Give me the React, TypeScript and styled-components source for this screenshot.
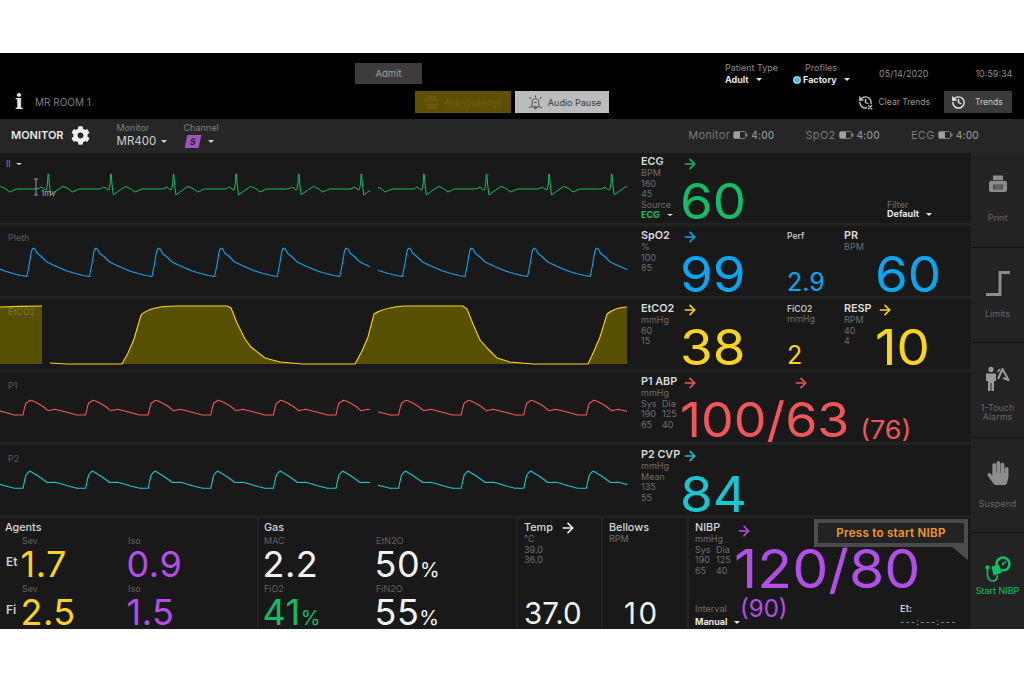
import React from 'react'
import styled, { createGlobalStyle } from 'styled-components'
import { ArrowRight, History } from 'lucide-react'
import { FaCog, FaHandPaper } from 'react-icons/fa'

const GREEN = '#12bd66'
const BLUE = '#0aa6f2'
const YELLOW = '#fbd51c'
const RED = '#f2565a'
const CYAN = '#17c6cf'
const PURPLE = '#b24fe8'

const GlobalStyle = createGlobalStyle`
	html, body {
		margin: 0;
		background: #fff;
	}
	* {
		box-sizing: border-box;
	}
`

const Page = styled.div`
	width: 1024px;
	height: 683px;
	padding-top: 53px;
	background: #fff;
	font-family: Inter, "Open Sans", sans-serif;
	overflow: hidden;
`

const Monitor = styled.div`
	height: 576px;
	overflow: hidden;
	background: #232323;
	display: flex;
	flex-direction: column;
`

const TopBar = styled.header`
	height: 66px;
	background: #000;
	flex: none;
`

const TopRow = styled.div`
	height: 38px;
	display: flex;
	align-items: center;
`

const AdmitButton = styled.div`
	width: 67px;
	height: 21px;
	margin-left: 355px;
	margin-top: 2px;
	background: #3d3d3d;
	color: #a0a0a0;
	font-size: 9.5px;
	display: flex;
	align-items: center;
	justify-content: center;
`

const Picker = styled.div<{ $left: number; $width: number }>`
	margin-left: ${p => p.$left}px;
	width: ${p => p.$width}px;
	display: flex;
	flex-direction: column;
	gap: 3px;
	margin-top: 3px;
`

const PickerLabel = styled.span<{ $indent?: number }>`
	font-size: 9px;
	line-height: 9px;
	color: #8d8d8d;
	padding-left: ${p => p.$indent || 0}px;
	white-space: nowrap;
`

const PickerValue = styled.span`
	font-size: 9px;
	line-height: 10px;
	font-weight: 700;
	color: #e6e6e6;
	display: flex;
	align-items: center;
	white-space: nowrap;
`

const ProfileDot = styled.i`
	width: 8px;
	height: 8px;
	border-radius: 50%;
	background: #3fb0e8;
	border: 2px solid #7fcdf0;
	margin-right: 2px;
`

const Caret = styled.i<{ $gap?: number; $size?: number; $color?: string }>`
	display: inline-block;
	margin-left: ${p => p.$gap ?? 7}px;
	width: 0;
	height: 0;
	border-left: ${p => p.$size || 3.5}px solid transparent;
	border-right: ${p => p.$size || 3.5}px solid transparent;
	border-top: ${p => (p.$size || 3.5) - 0.5}px solid ${p => p.$color || '#e6e6e6'};
`

const Clock = styled.span<{ $left: number }>`
	margin-left: ${p => p.$left}px;
	margin-top: 3px;
	font-size: 9px;
	color: #8d8d8d;
	white-space: nowrap;
`

const ActionRow = styled.div`
	height: 22px;
	display: flex;
	align-items: center;
`

const InfoMark = styled.span`
	width: 20px;
	margin-left: 15px;
	font-family: "DejaVu Serif", serif;
	font-size: 21px;
	line-height: 22px;
	font-weight: 700;
	color: #e8e8e8;
`

const RoomName = styled.span`
	width: 380px;
	font-size: 10px;
	color: #7f7f7f;
`

const AlarmButton = styled.div<{ $width: number; $bg: string; $fg: string; $shift?: number }>`
	width: ${p => p.$width}px;
	height: 22px;
	margin-right: 4px;
	padding-left: ${p => p.$shift || 0}px;
	background: ${p => p.$bg};
	color: ${p => p.$fg};
	font-size: 9px;
	display: flex;
	align-items: center;
	justify-content: center;
	gap: 5px;
`

const TrendLink = styled.div`
	margin-left: auto;
	margin-right: 14px;
	display: flex;
	align-items: center;
	gap: 6px;
	color: #9a9a9a;
	font-size: 8.5px;
`

const TrendButton = styled.div`
	width: 68px;
	height: 22px;
	margin-right: 12px;
	background: #3a3a3a;
	color: #c8c8c8;
	font-size: 8.5px;
	display: flex;
	align-items: center;
	gap: 9px;
	padding-left: 7px;
`

const SubBar = styled.div`
	height: 34px;
	flex: none;
	display: flex;
	align-items: center;
	padding: 0 0 2px 11px;
	background: #262626;
`

const SubTitle = styled.span`
	font-size: 11px;
	font-weight: 600;
	color: #e8e8e8;
`

const GearWrap = styled.span`
	margin-left: 7px;
	display: flex;
	color: #f0f0f0;
`

const SubPicker = styled.div<{ $left: number; $width: number }>`
	margin-left: ${p => p.$left}px;
	width: ${p => p.$width}px;
	display: flex;
	flex-direction: column;
	gap: 3px;
`

const SubLabel = styled.span`
	font-size: 9px;
	line-height: 9px;
	color: #7f7f7f;
`

const SubValue = styled.span`
	font-size: 11.5px;
	line-height: 13px;
	color: #cfcfcf;
	display: flex;
	align-items: center;
`

const ChannelBadge = styled.span`
	width: 14px;
	height: 13px;
	margin-left: 2px;
	background: #a552ba;
	color: #1b1b1b;
	font-size: 9px;
	font-weight: 700;
	transform: skewX(-12deg);
	display: flex;
	align-items: center;
	justify-content: center;
`

const BatteryList = styled.div`
	margin-left: auto;
	margin-right: 45px;
	display: flex;
	gap: 31px;
`

const BatteryItem = styled.span`
	display: flex;
	align-items: center;
	gap: 3px;
	font-size: 11px;
	letter-spacing: 0.3px;
	color: #787878;
	b {
		font-size: 10px;
		font-weight: 500;
		letter-spacing: 0.2px;
		color: #909090;
	}
`

const Body = styled.div`
	flex: 1;
	display: flex;
	min-height: 0;
`

const Main = styled.main`
	width: 971px;
	display: flex;
	flex-direction: column;
	gap: 3px;
`

const Row = styled.section`
	height: 70px;
	flex: none;
	background: #191919;
	display: flex;
`

const WaveArea = styled.div`
	position: relative;
	width: 632px;
	flex: none;
	svg {
		display: block;
	}
`

const WaveLabel = styled.span<{ $top: number; $color?: string }>`
	position: absolute;
	left: 8px;
	top: ${p => p.$top}px;
	font-size: 9px;
	color: ${p => p.$color || '#5c5c5c'};
`

const LeadLabel = styled.span`
	position: absolute;
	left: 6px;
	top: 6px;
	font-size: 8.5px;
	color: #8a8a8a;
	display: flex;
	align-items: center;
`

const CalLabel = styled.span`
	position: absolute;
	left: 41px;
	top: 35px;
	font-size: 8px;
	color: #a8a8a8;
`

const Params = styled.div`
	flex: 1;
	display: flex;
	padding-left: 9px;
`

const Metric = styled.div<{ $width?: number }>`
	display: flex;
	height: 100%;
	flex: none;
	width: ${p => (p.$width ? `${p.$width}px` : 'auto')};
`

const LabelColumn = styled.div<{ $width: number; $top?: number }>`
	width: ${p => p.$width}px;
	flex: none;
	padding-top: ${p => p.$top ?? 4}px;
	display: flex;
	flex-direction: column;
`

const MetricName = styled.span`
	font-size: 10.8px;
	line-height: 12px;
	font-weight: 600;
	color: #dcdcdc;
	white-space: nowrap;
`

const SmallText = styled.span`
	font-size: 9px;
	line-height: 10.6px;
	color: #6e6e6e;
	white-space: nowrap;
`

const PairText = styled(SmallText)`
	display: flex;
	span {
		width: 21px;
	}
`

const SourceValue = styled.span`
	font-size: 9px;
	line-height: 9px;
	font-weight: 700;
	color: ${GREEN};
	display: flex;
	align-items: center;
`

const ValueColumn = styled.div<{ $bottom?: number }>`
	display: flex;
	flex-direction: column;
	justify-content: space-between;
	padding-top: 3px;
	padding-bottom: ${p => p.$bottom ?? 3}px;
`

const ArrowRow = styled.div<{ $color: string }>`
	height: 16px;
	flex: none;
	display: flex;
	color: ${p => p.$color};
`

const ArrowSpacer = styled.span`
	width: 95px;
`

// the reference digits are wider than any installed face, so they get stretched a little
const BigValue = styled.div<{ $color: string; $size?: number; $lower?: number }>`
	font-size: ${p => p.$size || 49}px;
	line-height: 36px;
	margin-left: -2px;
	margin-bottom: ${p => -(p.$lower || 0)}px;
	transform: scaleX(1.08);
	transform-origin: left center;
	color: ${p => p.$color};
	white-space: nowrap;
`

const MeanValue = styled.span`
	font-size: 25px;
	margin-left: 10px;
	vertical-align: -2px;
`

const SideMetric = styled.div<{ $width: number }>`
	width: ${p => p.$width}px;
	flex: none;
	padding: 5px 0 3px;
	display: flex;
	flex-direction: column;
`

const SideName = styled.span`
	font-size: 8.5px;
	line-height: 10px;
	font-weight: 600;
	color: #c4c4c4;
`

const SideValue = styled.span<{ $color: string }>`
	margin-top: auto;
	font-size: 25px;
	line-height: 22px;
	color: ${p => p.$color};
`

const FilterBlock = styled.div`
	margin-left: auto;
	margin-right: 39px;
	align-self: flex-end;
	padding-bottom: 4px;
	display: flex;
	flex-direction: column;
	span:first-child {
		line-height: 9px;
	}
`

const BottomRow = styled.div`
	height: 111px;
	flex: none;
	display: grid;
	grid-template-columns: 257px 257px 83px 84px 282px;
	column-gap: 2px;
`

const Tile = styled.section`
	position: relative;
	background: #191919;
	padding: 4px 5px;
	display: flex;
	flex-direction: column;
	overflow: hidden;
`

const NarrowTile = styled(Tile)`
	padding: 4px 6px;
`

const TileTitle = styled.span`
	height: 12px;
	font-size: 10.8px;
	line-height: 12px;
	font-weight: 500;
	color: #d8d8d8;
	display: flex;
	align-items: center;
	gap: 7px;
	white-space: nowrap;
`

const ReadingGrid = styled.div<{ $first: number; $second: number }>`
	display: grid;
	grid-template-columns: ${p => p.$first}px ${p => p.$second}px 1fr;
	grid-auto-rows: 48px;
	margin-top: 2px;
`

const RowTag = styled.span`
	font-size: 12px;
	font-weight: 600;
	color: #d0d0d0;
	align-self: center;
	padding: 3px 0 0 1px;
`

const Reading = styled.div`
	display: flex;
	flex-direction: column;
`

const ReadingLabel = styled.span`
	font-size: 9px;
	line-height: 10px;
	color: #626262;
`

const ReadingValue = styled.span<{ $color: string }>`
	margin-top: 2px;
	margin-left: -1.5px;
	font-size: 36px;
	line-height: 32px;
	letter-spacing: 0.5px;
	color: ${p => p.$color};
	white-space: nowrap;
	small {
		font-size: 20px;
		letter-spacing: 0;
	}
`

const TempValue = styled.span<{ $indent?: number; $spread?: number }>`
	margin-top: auto;
	padding-left: ${p => p.$indent || 0}px;
	font-size: 29.5px;
	line-height: 24px;
	letter-spacing: ${p => p.$spread || 0}px;
	color: #f2f2f2;
`

const NibpTop = styled.div`
	display: flex;
`

const NibpLabels = styled.div`
	width: 41px;
	flex: none;
	display: flex;
	flex-direction: column;
`

const NibpValues = styled.div`
	display: flex;
	flex-direction: column;
	gap: 12px;
	padding-top: 1px;
`

const NibpBottom = styled.div`
	margin-top: auto;
	margin-bottom: -2px;
	display: flex;
	align-items: flex-end;
`

const IntervalBlock = styled.div`
	width: 45px;
	flex: none;
	display: flex;
	flex-direction: column;
	gap: 2px;
`

const NibpMean = styled.span`
	width: 160px;
	flex: none;
	align-self: flex-start;
	margin-top: -8px;
	font-size: 24px;
	line-height: 26px;
	color: ${PURPLE};
`

const ElapsedBlock = styled.div`
	display: flex;
	flex-direction: column;
	gap: 3px;
`

const ElapsedLabel = styled.span`
	font-size: 9.5px;
	line-height: 10px;
	font-weight: 600;
	color: #cfcfcf;
`

const ElapsedValue = styled.span`
	font-size: 9px;
	line-height: 10px;
	letter-spacing: 1.3px;
	color: #aaa;
	white-space: nowrap;
`

const Tooltip = styled.div`
	position: absolute;
	left: 125px;
	top: 1px;
	width: 154px;
	height: 28px;
	border: 4px solid #4c4c4c;
	background: #232323;
	color: #f2991f;
	font-size: 11.5px;
	letter-spacing: 0.3px;
	font-weight: 600;
	display: flex;
	align-items: center;
	justify-content: center;
	&::after {
		content: '';
		position: absolute;
		right: -4px;
		top: 24px;
		width: 16px;
		height: 13px;
		background: #4c4c4c;
		clip-path: polygon(0 0, 100% 0, 100% 100%);
	}
`

const Rail = styled.aside`
	width: 53px;
	flex: none;
	display: flex;
	flex-direction: column;
`

const RailButton = styled.div<{ $active?: boolean }>`
	height: 95px;
	flex: none;
	display: flex;
	flex-direction: column;
	align-items: center;
	padding-top: ${p => (p.$active ? 22 : 21)}px;
	border-bottom: 1px solid #141414;
	color: ${p => (p.$active ? GREEN : '#666')};
	&:first-child {
		padding-top: 17px;
	}
	&:last-child {
		height: 96px;
		border-bottom: 0;
	}
`

const RailIcon = styled.div<{ $active?: boolean }>`
	height: 28px;
	flex: none;
	display: flex;
	align-items: center;
	justify-content: center;
	color: ${p => (p.$active ? GREEN : '#8c8c8c')};
`

const RailLabel = styled.span<{ $gap?: number }>`
	margin-top: ${p => p.$gap ?? 12}px;
	font-size: 9px;
	line-height: 9px;
	text-align: center;
	white-space: nowrap;
`

type Point = [number, number]

const ecgShape: Point[] = [[-12, 36], [-9, 35.5], [-7, 34], [-5, 35], [-3, 37], [-1.5, 36.5], [-0.4, 30], [0, 21], [0.6, 21], [1.5, 32], [2.7, 42], [6.7, 39], [10, 36.7], [15, 33.3], [20, 35.7], [24.3, 39], [29.3, 36.7], [31, 36], [50.6, 36]]
const plethShape: Point[] = [[-6.5, 50.5], [-4, 38], [-2, 26], [-1, 23], [0, 22.3], [1.5, 23], [4, 27.5], [8, 30.5], [13, 35.7], [22, 40], [33, 44.7], [42, 47.5], [50, 49.5], [56, 50.5]]
const abpShape: Point[] = [[-7, 43], [-5.5, 36], [-4, 31], [-2, 30], [0, 28.3], [3, 29], [8, 31.5], [13, 34.5], [18, 38.7], [25, 37.3], [30, 38.5], [38, 40.5], [47, 43], [55.6, 43]]
const cvpShape: Point[] = [[-7, 43.3], [-5.5, 36], [-4, 30], [-2, 27.5], [0, 26], [3, 28], [8, 31], [13, 34.5], [17, 37.5], [25, 37.3], [30, 38.5], [38, 41], [47, 43.3], [55.6, 43.3]]

const yAt = (points: Point[], x: number) => {
	const next = points.findIndex(p => p[0] >= x)
	if (next <= 0) return points[Math.max(next, 0)][1]
	const [x0, y0] = points[next - 1]
	const [x1, y1] = points[next]
	return y0 + ((y1 - y0) * (x - x0)) / (x1 - x0)
}

// the sweep leaves a small gap at 370-378, every trace stops at 627
const buildTrace = (shape: Point[], start: number) => {
	const points: Point[] = []
	for (let i = -1; i < 11; i++) {
		const peak = start + i * 62.6
		shape.forEach(([x, y]) => points.push([peak + x, y]))
	}
	const segment = (from: number, to: number) => {
		const inner = points.filter(([x]) => x > from && x < to)
		const line: Point[] = [[from, yAt(points, from)], ...inner, [to, yAt(points, to)]]
		return line.map(([x, y], i) => `${i ? 'L' : 'M'}${x.toFixed(1)} ${y.toFixed(1)}`).join(' ')
	}
	return `${segment(0, 370)} ${segment(378, 627)}`
}

const co2Top = 'M0 8 L20 7.4 L42 7'
const co2Mid = 'M50 64 L66 65 L122 65 L128 54 L134 40 L141 16 C146 11 158 7 176 7 L227 7 L231 9 L237 24 L245 40 L251 48 L265 59 L280 63 L302 65 L355 65 L362 52 L368 38 L374 15 C380 11 388 8 404 7 L463 7 L467 10 L473 25 L480 41 L488 50 L497 59 L510 63 L533 65 L588 65 L594 52 L600 38 L607 15 C612 11 620 8 627 8'
const co2Fill = `${co2Top} L42 65 L0 65 Z ${co2Mid.replace('M50 64 L66 65 L122 65', 'M122 65')} L627 65 Z`

const Trace = ({ d, color }: { d: string; color: string }) => (
	<svg width="632" height="70" viewBox="0 0 632 70">
		<path d={d} fill="none" stroke={color} strokeWidth="1.1" strokeLinejoin="round" />
	</svg>
)

const Arrow = ({ size = 16 }: { size?: number }) => <ArrowRight size={size} strokeWidth={2.3} />

const BatteryIcon = () => (
	<svg width="15" height="8" viewBox="0 0 15 8">
		<rect x="0.5" y="0.5" width="12" height="7" rx="1" fill="none" stroke="#7a7a7a" />
		<rect x="1" y="1" width="6" height="6" fill="#a0a0a0" />
		<rect x="13" y="2.5" width="1.5" height="3" fill="#7a7a7a" />
	</svg>
)

const AckIcon = () => (
	<svg width="15" height="15" viewBox="0 0 16 16" fill="none" stroke="#6f5e08" strokeWidth="1.4">
		<circle cx="8" cy="8" r="6.5" />
		<path d="M1.5 6H14.5M1.5 10H14.5M5 3.5H11M5 12.5H11" />
	</svg>
)

const BellIcon = () => (
	<svg width="15" height="15" viewBox="0 0 17 17" fill="none" stroke="#3a3a3a" strokeWidth="1">
		<path d="M4 13.5C5 11.5 4.5 9 5 7C5.5 5 7 4 8.5 4C10 4 11.5 5 12 7C12.5 9 12 11.5 13 13.5Z" />
		<circle cx="8.5" cy="14.8" r="1" />
		<path d="M1.5 2.5L4 4.5M15.5 2.5L13 4.5M8.5 0.5V2.5M1 14H3M14 14H16M7 8.5L10 8.5" />
	</svg>
)

const ClearTrendsIcon = () => (
	<svg width="15" height="15" viewBox="0 0 24 24" fill="none" stroke="#c8c8c8" strokeWidth="2.2" strokeLinecap="round" strokeLinejoin="round">
		<path d="M3 12a9 9 0 1 0 9-9 9.75 9.75 0 0 0-6.74 2.74L3 8" />
		<path d="M3 3v5h5" />
		<path d="M12 7v5l4 2" />
		<rect x="15" y="15" width="9" height="9" fill="#000" stroke="none" />
		<path d="M17 17l5 5M22 17l-5 5" />
	</svg>
)

const PrintIcon = () => (
	<svg width="20" height="20" viewBox="0 0 20 20">
		<path d="M5 1.5H15V6H5Z" fill="#8c8c8c" />
		<path d="M3 6.8H17C18 6.8 19 7.8 19 9V16C19 17 18 18 17 18H3C2 18 1 17 1 16V9C1 7.8 2 6.8 3 6.8Z" fill="#8c8c8c" />
		<path d="M5 10.5H15V15.5H5Z" fill="#4a4a4a" />
		<path d="M6.5 12H13.5M6.5 14H13.5" stroke="#8c8c8c" strokeWidth="0.8" />
	</svg>
)

const LimitsIcon = () => (
	<svg width="24" height="25" viewBox="0 0 24 25" fill="none" stroke="#8c8c8c" strokeWidth="3">
		<path d="M0 23.5H14V1.5H24" />
	</svg>
)

const OneTouchIcon = () => (
	<svg width="25" height="25" viewBox="0 0 25 25">
		<circle cx="6" cy="3.4" r="2.6" fill="#9a9a9a" />
		<path d="M1 7.5H11V15H9V25H6.5V17H5.5V25H3V15H1Z" fill="#9a9a9a" />
		<path d="M13 13L17.5 3L23.5 14L18 12" fill="none" stroke="#9a9a9a" strokeWidth="2" strokeLinejoin="round" />
		<path d="M12.5 6L15 3" stroke="#9a9a9a" strokeWidth="1.6" />
	</svg>
)

const CuffIcon = () => (
	<svg width="26" height="27" viewBox="0 0 26 27" fill="none">
		<circle cx="18" cy="8" r="6.5" stroke={GREEN} strokeWidth="2.6" />
		<circle cx="18" cy="8" r="1.3" fill={GREEN} />
		<path d="M18 8L21 5" stroke={GREEN} strokeWidth="1.2" />
		<path d="M6.5 10.5L14 8.5L16.5 17L8.5 19.5Z" fill={GREEN} />
		<path d="M2.5 12V19C2.5 24 7 26 10 24.5C12 23.5 12.5 21 12.5 19" stroke={GREEN} strokeWidth="1.6" />
		<circle cx="2.5" cy="11.5" r="2.2" fill={GREEN} />
	</svg>
)

const App = () => {
	return (
		<Page>
			<GlobalStyle />
			<Monitor>
				<TopBar>
					<TopRow>
						<AdmitButton>Admit</AdmitButton>
						<Picker $left={303} $width={68}>
							<PickerLabel>Patient Type</PickerLabel>
							<PickerValue>Adult<Caret /></PickerValue>
						</Picker>
						<Picker $left={0} $width={86}>
							<PickerLabel $indent={12}>Profiles</PickerLabel>
							<PickerValue><ProfileDot />Factory<Caret /></PickerValue>
						</Picker>
						<Clock $left={0}>05/14/2020</Clock>
						<Clock $left={47}>10:59:34</Clock>
					</TopRow>
					<ActionRow>
						<InfoMark>i</InfoMark>
						<RoomName>MR ROOM 1</RoomName>
						<AlarmButton $width={96} $bg="#5e4f03" $fg="#6f5e08"><AckIcon />Acknowledge</AlarmButton>
						<AlarmButton $width={94} $bg="#bcbcbc" $fg="#3a3a3a" $shift={5}><BellIcon />Audio Pause</AlarmButton>
						<TrendLink><ClearTrendsIcon />Clear Trends</TrendLink>
						<TrendButton><History size={15} strokeWidth={2.2} color="#eee" />Trends</TrendButton>
					</ActionRow>
				</TopBar>
				<SubBar>
					<SubTitle>MONITOR</SubTitle>
					<GearWrap><FaCog size={19} /></GearWrap>
					<SubPicker $left={27} $width={67}>
						<SubLabel>Monitor</SubLabel>
						<SubValue>MR400<Caret $color="#cfcfcf" $gap={5} /></SubValue>
					</SubPicker>
					<SubPicker $left={0} $width={60}>
						<SubLabel>Channel</SubLabel>
						<SubValue><ChannelBadge>5</ChannelBadge><Caret $color="#cfcfcf" $gap={8} /></SubValue>
					</SubPicker>
					<BatteryList>
						<BatteryItem>Monitor <BatteryIcon /> <b>4:00</b></BatteryItem>
						<BatteryItem>SpO2 <BatteryIcon /> <b>4:00</b></BatteryItem>
						<BatteryItem>ECG <BatteryIcon /> <b>4:00</b></BatteryItem>
					</BatteryList>
				</SubBar>
				<Body>
					<Main>
						<Row>
							<WaveArea>
								<svg width="632" height="70" viewBox="0 0 632 70">
									<path d={buildTrace(ecgShape, 48)} fill="none" stroke={GREEN} strokeWidth="1" />
									<path d="M34 26H38M36 26V42M34 42H38" fill="none" stroke="#9a9a9a" />
								</svg>
								<LeadLabel>II<Caret $size={3} $gap={5} /></LeadLabel>
								<CalLabel>1mv</CalLabel>
							</WaveArea>
							<Params>
								<Metric>
									<LabelColumn $width={41} $top={3}>
										<MetricName>ECG</MetricName>
										<SmallText>BPM</SmallText>
										<SmallText>160</SmallText>
										<SmallText>45</SmallText>
										<SmallText>Source</SmallText>
										<SourceValue>ECG<Caret $size={3} /></SourceValue>
									</LabelColumn>
									<ValueColumn>
										<ArrowRow $color={GREEN}><Arrow /></ArrowRow>
										<BigValue $color={GREEN}>60</BigValue>
									</ValueColumn>
								</Metric>
								<FilterBlock>
									<SmallText>Filter</SmallText>
									<PickerValue>Default<Caret /></PickerValue>
								</FilterBlock>
							</Params>
						</Row>
						<Row>
							<WaveArea>
								<Trace d={buildTrace(plethShape, 33.3)} color={BLUE} />
								<WaveLabel $top={6}>Pleth</WaveLabel>
							</WaveArea>
							<Params>
								<Metric $width={146}>
									<LabelColumn $width={41}>
										<MetricName>SpO2</MetricName>
										<SmallText>%</SmallText>
										<SmallText>100</SmallText>
										<SmallText>85</SmallText>
									</LabelColumn>
									<ValueColumn>
										<ArrowRow $color={BLUE}><Arrow /></ArrowRow>
										<BigValue $color={BLUE}>99</BigValue>
									</ValueColumn>
								</Metric>
								<SideMetric $width={57}>
									<SideName>Perf</SideName>
									<SideValue $color={BLUE}>2.9</SideValue>
								</SideMetric>
								<Metric>
									<LabelColumn $width={33}>
										<MetricName>PR</MetricName>
										<SmallText>BPM</SmallText>
									</LabelColumn>
									<ValueColumn>
										<ArrowRow $color="transparent" />
										<BigValue $color={BLUE}>60</BigValue>
									</ValueColumn>
								</Metric>
							</Params>
						</Row>
						<Row>
							<WaveArea>
								<svg width="632" height="70" viewBox="0 0 632 70">
									<path d={co2Fill} fill="#575000" />
									<path d={`${co2Top} ${co2Mid}`} fill="none" stroke={YELLOW} strokeWidth="1.1" />
								</svg>
								<WaveLabel $top={7} $color="#807a30">EtCO2</WaveLabel>
							</WaveArea>
							<Params>
								<Metric $width={146}>
									<LabelColumn $width={41}>
										<MetricName>EtCO2</MetricName>
										<SmallText>mmHg</SmallText>
										<SmallText>60</SmallText>
										<SmallText>15</SmallText>
									</LabelColumn>
									<ValueColumn>
										<ArrowRow $color={YELLOW}><Arrow /></ArrowRow>
										<BigValue $color={YELLOW}>38</BigValue>
									</ValueColumn>
								</Metric>
								<SideMetric $width={57}>
									<SideName>FiCO2</SideName>
									<SmallText>mmHg</SmallText>
									<SideValue $color={YELLOW}>2</SideValue>
								</SideMetric>
								<Metric>
									<LabelColumn $width={33}>
										<MetricName>RESP</MetricName>
										<SmallText>RPM</SmallText>
										<SmallText>40</SmallText>
										<SmallText>4</SmallText>
									</LabelColumn>
									<ValueColumn>
										<ArrowRow $color={YELLOW}><Arrow /></ArrowRow>
										<BigValue $color={YELLOW}>10</BigValue>
									</ValueColumn>
								</Metric>
							</Params>
						</Row>
						<Row>
							<WaveArea>
								<Trace d={buildTrace(abpShape, 30)} color={RED} />
								<WaveLabel $top={8}>P1</WaveLabel>
							</WaveArea>
							<Params>
								<Metric>
									<LabelColumn $width={41}>
										<MetricName>P1 ABP</MetricName>
										<SmallText>mmHg</SmallText>
										<PairText><span>Sys</span>Dia</PairText>
										<PairText><span>190</span>125</PairText>
										<PairText><span>65</span>40</PairText>
									</LabelColumn>
									<ValueColumn>
										<ArrowRow $color={RED}><Arrow /><ArrowSpacer /><Arrow /></ArrowRow>
										<BigValue $color={RED} $size={48} $lower={9}>100/63<MeanValue>(76)</MeanValue></BigValue>
									</ValueColumn>
								</Metric>
							</Params>
						</Row>
						<Row>
							<WaveArea>
								<Trace d={buildTrace(cvpShape, 30)} color={CYAN} />
								<WaveLabel $top={8}>P2</WaveLabel>
							</WaveArea>
							<Params>
								<Metric>
									<LabelColumn $width={41}>
										<MetricName>P2 CVP</MetricName>
										<SmallText>mmHg</SmallText>
										<SmallText>Mean</SmallText>
										<SmallText>135</SmallText>
										<SmallText>55</SmallText>
									</LabelColumn>
									<ValueColumn $bottom={2}>
										<ArrowRow $color={CYAN}><Arrow /></ArrowRow>
										<BigValue $color={CYAN}>84</BigValue>
									</ValueColumn>
								</Metric>
							</Params>
						</Row>
						<BottomRow>
							<Tile>
								<TileTitle>Agents</TileTitle>
								<ReadingGrid $first={17} $second={106}>
									<RowTag>Et</RowTag>
									<Reading>
										<ReadingLabel>Sev</ReadingLabel>
										<ReadingValue $color={YELLOW}>1.7</ReadingValue>
									</Reading>
									<Reading>
										<ReadingLabel>Iso</ReadingLabel>
										<ReadingValue $color={PURPLE}>0.9</ReadingValue>
									</Reading>
									<RowTag>Fi</RowTag>
									<Reading>
										<ReadingLabel>Sev</ReadingLabel>
										<ReadingValue $color={YELLOW}>2.5</ReadingValue>
									</Reading>
									<Reading>
										<ReadingLabel>Iso</ReadingLabel>
										<ReadingValue $color={PURPLE}>1.5</ReadingValue>
									</Reading>
								</ReadingGrid>
							</Tile>
							<Tile>
								<TileTitle>Gas</TileTitle>
								<ReadingGrid $first={0} $second={112}>
									<span />
									<Reading>
										<ReadingLabel>MAC</ReadingLabel>
										<ReadingValue $color="#f4f4f4">2.2</ReadingValue>
									</Reading>
									<Reading>
										<ReadingLabel>EtN2O</ReadingLabel>
										<ReadingValue $color="#f4f4f4">50<small>%</small></ReadingValue>
									</Reading>
									<span />
									<Reading>
										<ReadingLabel>FiO2</ReadingLabel>
										<ReadingValue $color={GREEN}>41<small>%</small></ReadingValue>
									</Reading>
									<Reading>
										<ReadingLabel>FiN2O</ReadingLabel>
										<ReadingValue $color="#f4f4f4">55<small>%</small></ReadingValue>
									</Reading>
								</ReadingGrid>
							</Tile>
							<NarrowTile>
								<TileTitle>Temp <ArrowRight size={16} strokeWidth={2.4} color="#f4f4f4" /></TileTitle>
								<SmallText>°C</SmallText>
								<SmallText>39.0</SmallText>
								<SmallText>36.0</SmallText>
								<TempValue>37.0</TempValue>
							</NarrowTile>
							<NarrowTile>
								<TileTitle>Bellows</TileTitle>
								<SmallText>RPM</SmallText>
								<TempValue $indent={15} $spread={2.5}>10</TempValue>
							</NarrowTile>
							<NarrowTile>
								<NibpTop>
									<NibpLabels>
										<TileTitle>NIBP</TileTitle>
										<SmallText>mmHg</SmallText>
										<PairText><span>Sys</span>Dia</PairText>
										<PairText><span>190</span>125</PairText>
										<PairText><span>65</span>40</PairText>
									</NibpLabels>
									<NibpValues>
										<ArrowRow $color={PURPLE}><Arrow /></ArrowRow>
										<BigValue $color={PURPLE} $size={53}>120/80</BigValue>
									</NibpValues>
								</NibpTop>
								<NibpBottom>
									<IntervalBlock>
										<SmallText>Interval</SmallText>
										<PickerValue>Manual<Caret /></PickerValue>
									</IntervalBlock>
									<NibpMean>(90)</NibpMean>
									<ElapsedBlock>
										<ElapsedLabel>Et:</ElapsedLabel>
										<ElapsedValue>---:---:---</ElapsedValue>
									</ElapsedBlock>
								</NibpBottom>
								<Tooltip>Press to start NIBP</Tooltip>
							</NarrowTile>
						</BottomRow>
					</Main>
					<Rail>
						<RailButton>
							<RailIcon><PrintIcon /></RailIcon>
							<RailLabel $gap={15}>Print</RailLabel>
						</RailButton>
						<RailButton>
							<RailIcon><LimitsIcon /></RailIcon>
							<RailLabel>Limits</RailLabel>
						</RailButton>
						<RailButton>
							<RailIcon><OneTouchIcon /></RailIcon>
							<RailLabel $gap={11}>1-Touch<br />Alarms</RailLabel>
						</RailButton>
						<RailButton>
							<RailIcon><FaHandPaper size={24} /></RailIcon>
							<RailLabel>Suspend</RailLabel>
						</RailButton>
						<RailButton $active>
							<RailIcon $active><CuffIcon /></RailIcon>
							<RailLabel $gap={3}>Start NIBP</RailLabel>
						</RailButton>
					</Rail>
				</Body>
			</Monitor>
		</Page>
	)
}

export default App
